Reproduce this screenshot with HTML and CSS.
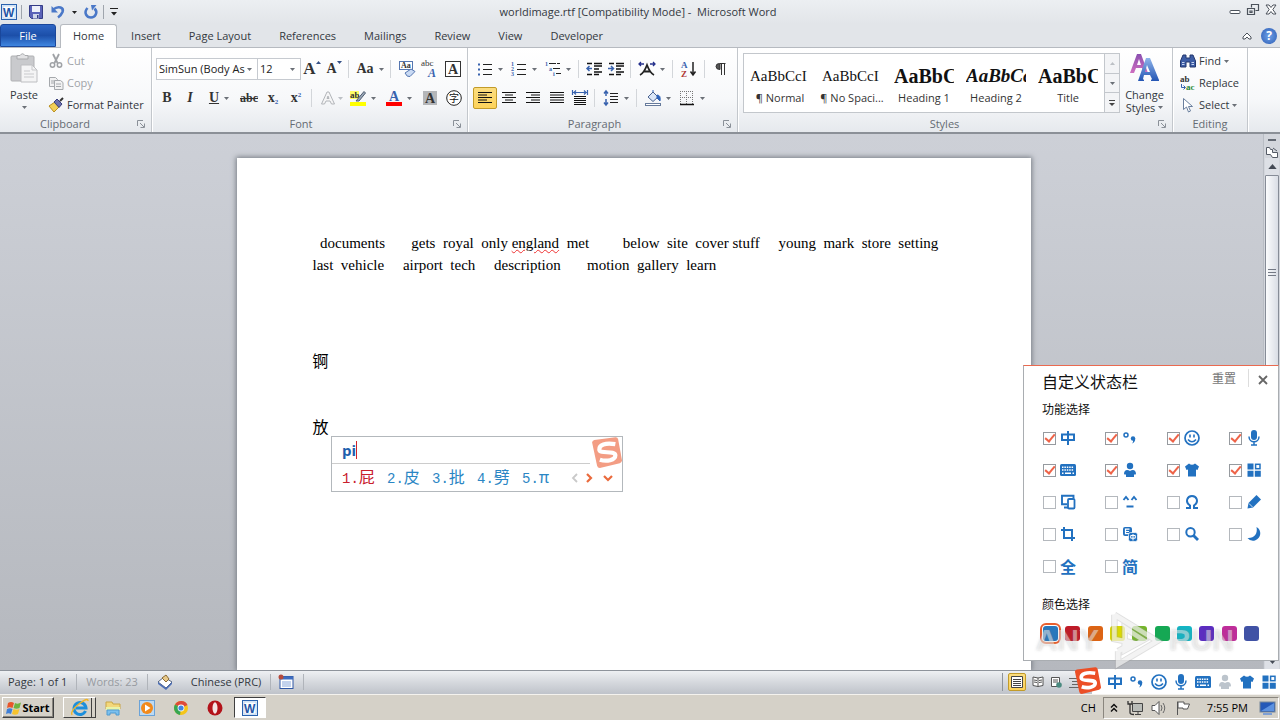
FILE: index.html
```html
<!DOCTYPE html>
<html lang="en">
<head>
<meta charset="utf-8">
<title>worldimage.rtf [Compatibility Mode] - Microsoft Word</title>
<link rel="stylesheet" href="styles.css">
</head>
<body>
<svg class="defs" aria-hidden="true">
  <defs>
    <linearGradient id="gBlue" x1="0" y1="0" x2="0" y2="1"><stop offset="0" stop-color="#8fb4ea"/><stop offset="1" stop-color="#2456b4"/></linearGradient>
    <linearGradient id="gPurple" x1="0" y1="0" x2="0" y2="1"><stop offset="0" stop-color="#8a4fb0"/><stop offset="1" stop-color="#cf6fc0"/></linearGradient>
  </defs>
  <symbol id="word" viewBox="0 0 16 16"><rect x=".5" y=".5" width="15" height="15" fill="#e8f1fb" stroke="#2a62ae"/><rect x="2" y="2" width="12" height="12" fill="#fff" stroke="#9cbfe6" stroke-width=".6"/><text x="2" y="12.500" class="wlogo">W</text></symbol>
  <symbol id="caret" viewBox="0 0 5 3"><path d="M0 0h5L2.500 3z" fill="currentColor"/></symbol>
  <symbol id="launch" viewBox="0 0 8 8"><path d="M.5 6V.5H6M7.500 3.500v4h-4M3 3l4 4" fill="none" stroke="#8a9098"/></symbol>
  <symbol id="sogou" viewBox="0 0 28 28"><path d="M1 5Q1 3 3 2.600L22 .2Q24 0 24.500 2L28 21Q28 23 26 23.600L8 28Q6 28 5.500 26Z" fill="currentColor"/><path d="M22 6.500C13 5 7 7 7.500 11.500C8 15.500 21.500 12 22 16.500C22 21 14 22.500 8 20.500" fill="none" stroke="#fff" stroke-width="3.800"/></symbol>
  <symbol id="zhong" viewBox="0 0 16 16"><path d="M2 4.500h12v5.500H2zM8 1v14" fill="none" stroke="currentColor" stroke-width="2"/></symbol>
  <symbol id="punct" viewBox="0 0 16 16"><circle cx="4" cy="5" r="2" fill="none" stroke="currentColor" stroke-width="1.500"/><circle cx="11" cy="8.500" r="2.200" fill="currentColor"/><path d="M13.200 8.500q.3 3.500-3.200 5q1.500-2 1-4z" fill="currentColor"/></symbol>
  <symbol id="smile" viewBox="0 0 16 16"><circle cx="8" cy="8" r="7" fill="none" stroke="currentColor" stroke-width="1.700"/><path d="M6 4.500v3M10 4.500v3M4 9.500q4 4.500 8 0" fill="none" stroke="currentColor" stroke-width="1.600"/></symbol>
  <symbol id="mic" viewBox="0 0 16 16"><rect x="5" y="0" width="6" height="10" rx="3" fill="currentColor"/><path d="M3 6.500C3 13.500 13 13.500 13 6.500M8 12v3M5 15h6" fill="none" stroke="currentColor" stroke-width="1.500"/></symbol>
  <symbol id="kbd" viewBox="0 0 16 16"><rect y="2" width="16" height="12" rx="1.500" fill="currentColor"/><path d="M2 5.200h12M2 8h12" stroke="#fff" stroke-width="1.400" stroke-dasharray="1.500 .9"/><path d="M2 11.200h1.500M5 11.200h6M12.500 11.200H14" stroke="#fff" stroke-width="1.400"/></symbol>
  <symbol id="person" viewBox="0 0 16 16"><circle cx="8" cy="4" r="3.200" fill="currentColor"/><path d="M2 12C2 7 6 7.500 8 9C10 7.500 14 7 14 12Q14 12.500 12 12.500V15H4V12.500Q2 12.500 2 12Z" fill="currentColor"/></symbol>
  <symbol id="shirt" viewBox="0 0 16 16"><path d="M5 1.500Q8 4 11 1.500L15 4.500L13.500 8L12 7.500V14.500H4V7.500L2.500 8L1 4.500Z" fill="currentColor"/></symbol>
  <symbol id="grid" viewBox="0 0 16 16"><path d="M1.500 1.500h6v6h-6zM1.500 8.800h6v6h-6zM8.800 8.800h6v6h-6z" fill="currentColor"/><rect x="9.600" y="2.300" width="4.400" height="4.400" fill="none" stroke="currentColor" stroke-width="1.500"/></symbol>
  <symbol id="devices" viewBox="0 0 16 16"><path d="M13.500 4V1.800H2v8.500h5M4 13.500h4" fill="none" stroke="currentColor" stroke-width="1.900"/><rect x="8" y="5" width="6.500" height="9.500" rx="1" fill="#fff" stroke="currentColor" stroke-width="1.800"/></symbol>
  <symbol id="face" viewBox="0 0 16 16"><path d="M1.500 6L4 3l2.500 3M9.500 6L12 3l2.500 3M4.500 12.500h7" fill="none" stroke="currentColor" stroke-width="1.900"/></symbol>
  <symbol id="omega" viewBox="0 0 16 16"><path d="M2 14h4v-2.500C.5 7.500 3.500 2 8 2S15.500 7.500 10 11.500V14h4" fill="none" stroke="currentColor" stroke-width="2"/></symbol>
  <symbol id="pencil" viewBox="0 0 16 16"><path d="M10.500 1L15 5.500L7 13.500L1.500 14.500L2.500 9z" fill="currentColor"/><path d="M3 9.500L6.500 13" stroke="#fff" stroke-width=".8"/></symbol>
  <symbol id="crop" viewBox="0 0 16 16"><path d="M4 1v11h11M1 4h11v11" fill="none" stroke="currentColor" stroke-width="2"/></symbol>
  <symbol id="trans" viewBox="0 0 16 16"><rect x="1" y="1" width="9" height="9" rx="2" fill="currentColor"/><path d="M7.500 3.200h-4v4.500h4M3.500 5.500h3.500" fill="none" stroke="#fff" stroke-width="1.200"/><rect x="6.500" y="6.500" width="9" height="9" rx="2" fill="currentColor" stroke="#fff" stroke-width=".7"/><path d="M8.700 9.500h4.600v2.700H8.700zM11 8v6.500" fill="none" stroke="#fff" stroke-width="1"/></symbol>
  <symbol id="search" viewBox="0 0 16 16"><circle cx="6.500" cy="6.300" r="4.200" fill="none" stroke="currentColor" stroke-width="2"/><path d="M9.500 9.500L14 14" stroke="currentColor" stroke-width="2.800"/></symbol>
  <symbol id="moon" viewBox="0 0 16 16"><path d="M10.500 1C16 4 15.500 12 9 14.500Q4 15.500 1.500 12C8 12.500 12 8 10.500 1Z" fill="currentColor"/></symbol>
</svg>

<header class="titlebar">
  <div class="qat">
    <svg class="i16"><use href="#word"/></svg>
    <span class="vline"></span>
    <button aria-label="Save"><svg class="i16" viewBox="0 0 16 16"><path d="M1.500 1.500h13v13h-11l-2-2z" fill="#5a62b8" stroke="#343c86"/><path d="M4 2h8v6H4z" fill="#eef1fa"/><path d="M5 10h6v4.500H5z" fill="#cfd6ea"/><path d="M9 11h1.500v3H9z" fill="#343c86"/></svg></button>
    <button aria-label="Undo"><svg class="i16" viewBox="0 0 16 16"><path d="M3 5.500C9 1 14 4 12.500 8Q11 11.500 8 13.500" fill="none" stroke="#4a78c8" stroke-width="2.600"/><path d="M1.500 2v6.500H8z" fill="#4a78c8"/></svg></button>
    <svg class="caret dark"><use href="#caret"/></svg>
    <button aria-label="Repeat"><svg class="i16" viewBox="0 0 16 16"><path d="M4.500 4C0 9 4 13.500 8 13.500S15.500 8.500 11.500 4.500" fill="none" stroke="#4a78c8" stroke-width="2.600"/><path d="M8 1h5.500L9 6.500z" fill="#4a78c8"/></svg></button>
    <span class="vline"></span>
    <svg class="i8" viewBox="0 0 8 8"><path d="M0 .5h8" stroke="#222"/><path d="M1 4h6L4 7.500z" fill="#222"/></svg>
  </div>
  <h1>worldimage.rtf [Compatibility Mode] -&nbsp; Microsoft Word</h1>
  <div class="wincontrols">
    <button aria-label="Minimize"><svg viewBox="0 0 12 12"><rect x="1" y="6.500" width="10" height="3" rx="1" fill="#fff" stroke="#4c535c"/></svg></button>
    <button aria-label="Restore"><svg viewBox="0 0 12 12"><path d="M4.500 3.500v-3h7v6h-3M.5 4.500h7v6h-7zM3 7h2v1.500H3z" fill="none" stroke="#4c535c" stroke-width="1.200"/></svg></button>
    <button aria-label="Close"><svg viewBox="0 0 12 12"><path d="M1 1h3l2 2.500L8 1h3L7.800 5.500 11 10H8L6 7.500 4 10H1l3.200-4.500z" fill="#fff" stroke="#4c535c"/></svg></button>
  </div>
</header>

<nav class="tabs">
  <button class="file">File</button>
  <button class="tab active">Home</button>
  <button class="tab">Insert</button>
  <button class="tab">Page Layout</button>
  <button class="tab">References</button>
  <button class="tab">Mailings</button>
  <button class="tab">Review</button>
  <button class="tab">View</button>
  <button class="tab">Developer</button>
  <div class="tabend">
    <svg class="i10" viewBox="0 0 10 10"><path d="M1 6l4-4 4 4v2H7L5 6 3 8H1z" fill="#fff" stroke="#4c535c"/></svg>
    <button class="help" aria-label="Help">?</button>
  </div>
</nav>

<section class="ribbon">
  <div class="group clipboard">
    <div class="body">
      <button class="paste"><svg viewBox="0 0 28 30"><rect x="1" y="3" width="23" height="25" rx="1" fill="#c9cacd" stroke="#b0b1b4"/><path d="M7 5V2.500h3Q12.500-1 15 2.500h3V6H7z" fill="#e2e2e4" stroke="#a9aaad"/><path d="M11 12h11l5 5v12H11z" fill="#f4f4f5" stroke="#bdbec1"/><path d="M22 12v5h5M14 18h6M14 21h10M14 24h10" fill="none" stroke="#c8c9cc"/></svg>Paste<svg class="caret"><use href="#caret"/></svg></button>
      <div class="stack">
        <button class="off"><svg class="i16" viewBox="0 0 16 16"><path d="M5 1l4.500 9M11 1L6.500 10" stroke="#9fa2a6" stroke-width="1.800"/><circle cx="4.500" cy="12" r="2.200" fill="none" stroke="#9fa2a6" stroke-width="1.500"/><circle cx="11.500" cy="12" r="2.200" fill="none" stroke="#9fa2a6" stroke-width="1.500"/></svg>Cut</button>
        <button class="off"><svg class="i16" viewBox="0 0 16 16"><path d="M1.500 2.500h6l2 2v7h-8zM3 6h4M3 8h4" fill="#f1f1f2" stroke="#a5a8ac"/><path d="M6.500 5.500h6l2.500 2v7H6.500zM8 9h5M8 11.500h5" fill="#f1f1f2" stroke="#a5a8ac"/></svg>Copy</button>
        <button><svg class="i16" viewBox="0 0 16 16"><path d="M1 9l6-4 4 5-5 5z" fill="#f2cf57" stroke="#b98f1f"/><path d="M6 5l3-3 5 5-3 3.500z" fill="#6a6fae" stroke="#3a3f7c"/><path d="M12 4l3-3" stroke="#333" stroke-width="2"/></svg>Format Painter</button>
      </div>
    </div>
    <div class="caption"><span>Clipboard</span><svg class="i8"><use href="#launch"/></svg></div>
  </div>

  <div class="group font">
    <div class="body rows">
      <div class="row">
        <label class="combo name"><select aria-label="Font"><option>SimSun (Body As</option></select><svg class="caret"><use href="#caret"/></svg></label>
        <label class="combo size"><select aria-label="Font size"><option>12</option></select><svg class="caret"><use href="#caret"/></svg></label>
        <button class="w22 serif big" aria-label="Grow font">A<svg class="caret mark-up flip"><use href="#caret"/></svg></button>
        <button class="w22 serif mid" aria-label="Shrink font">A<svg class="caret mark-up"><use href="#caret"/></svg></button>
        <span class="sep"></span>
        <button class="w34 serif mid">Aa<svg class="caret"><use href="#caret"/></svg></button>
        <span class="sep"></span>
        <button class="w24" aria-label="Clear formatting"><svg class="i16" viewBox="0 0 16 16"><rect x=".5" y=".5" width="13" height="8" fill="#fff" stroke="#5576b0"/><text x="2" y="7" class="t8">Aa</text><path d="M6 12l6-4 4 2.500-5 5q-3 1-5-3.500z" fill="#c9daf4" stroke="#5576b0"/></svg></button>
        <button class="w22" aria-label="Phonetic guide"><svg class="i18" viewBox="0 0 18 18"><text x="0" y="6" class="t9">abc</text><text x="7" y="17" class="t12 blue it">A</text></svg></button>
        <button class="w24" aria-label="Character border"><svg class="i16" viewBox="0 0 16 16"><rect x=".5" y=".5" width="15" height="15" fill="#fff" stroke="#333"/><text x="3" y="13" class="t14">A</text></svg></button>
      </div>
      <div class="row">
        <button class="w22 serif mid">B</button>
        <button class="w24 serif mid it">I</button>
        <button class="w34 serif mid"><u>U</u><svg class="caret"><use href="#caret"/></svg></button>
        <button class="w26 serif small"><s>abc</s></button>
        <button class="w22 serif mid">x<sub>2</sub></button>
        <button class="w24 serif mid">x<sup>2</sup></button>
        <span class="sep"></span>
        <button class="w30" aria-label="Text effects"><svg class="i16" viewBox="0 0 16 16"><path d="M1.500 14L7 2h2l5.500 12h-3L10 11H6l-1.500 3zM7 8.500h2L8 6z" fill="#f5f5f6" stroke="#b2b5b9"/></svg><svg class="caret pale"><use href="#caret"/></svg></button>
        <button class="w34" aria-label="Highlight"><svg class="i16" viewBox="0 0 16 16"><rect y="12" width="16" height="4" fill="#ff0"/><rect y="1" width="9" height="8" fill="#ff6"/><text x="0" y="8" class="t9 bold">ab</text><path d="M6 11L14 1.500l1.500 1.500L9 11z" fill="#9aa7b8" stroke="#4f5d70"/></svg><svg class="caret"><use href="#caret"/></svg></button>
        <button class="w34 shift" aria-label="Font color"><svg class="i16" viewBox="0 0 16 16"><text x="3" y="11" class="t14 blue">A</text><rect y="12" width="16" height="4" fill="#f00"/></svg><svg class="caret"><use href="#caret"/></svg></button>
        <button class="w24" aria-label="Character shading"><svg class="i16" viewBox="0 0 16 16"><rect x="1" y="1" width="14" height="14" fill="#b4b6b9"/><text x="3" y="13" class="t14">A</text></svg></button>
        <button class="w24" aria-label="Enclose characters"><svg class="i16" viewBox="0 0 16 16"><circle cx="8" cy="8" r="7.300" fill="#fff" stroke="#222"/><text x="3" y="12" class="cjk10">字</text></svg></button>
      </div>
    </div>
    <div class="caption"><span>Font</span><svg class="i8"><use href="#launch"/></svg></div>
  </div>

  <div class="group para">
    <div class="body rows">
      <div class="row">
        <button class="w34" aria-label="Bullets"><svg class="i16" viewBox="0 0 16 16"><path d="M6 3.500h9M6 8.500h9M6 13.500h9" stroke="#222"/><path d="M1 2.500h2v2H1zM1 7.500h2v2H1zM1 12.500h2v2H1z" fill="#3862ae"/></svg><svg class="caret"><use href="#caret"/></svg></button>
        <button class="w34" aria-label="Numbering"><svg class="i16" viewBox="0 0 16 16"><path d="M6 3.500h9M6 8.500h9M6 13.500h9" stroke="#222"/><text x="0" y="5" class="t6">1</text><text x="0" y="10" class="t6">2</text><text x="0" y="15" class="t6">3</text></svg><svg class="caret"><use href="#caret"/></svg></button>
        <button class="w34" aria-label="Multilevel list"><svg class="i16" viewBox="0 0 16 16"><path d="M4 2.500h11M8 7.500h8M11 12.500h5" stroke="#222" stroke-dasharray="7 1"/><text x="0" y="5" class="t6">1</text><text x="4" y="10" class="t6">a</text><text x="8" y="15" class="t6">i</text></svg><svg class="caret"><use href="#caret"/></svg></button>
        <span class="sep"></span>
        <button class="w22" aria-label="Decrease indent"><svg class="i16" viewBox="0 0 16 16"><path d="M1 2.500h5M8 2.500h8M8 5h8M8 8h5M8 11h8M1 13.500h5M8 13.500h5" stroke="#111" stroke-width="1.500"/><path d="M6 7.500H1M3.500 5L1 7.500 3.500 10" fill="none" stroke="#3862ae" stroke-width="1.500"/></svg></button>
        <button class="w22" aria-label="Increase indent"><svg class="i16" viewBox="0 0 16 16"><path d="M1 2.500h5M8 2.500h8M8 5h8M8 8h5M8 11h8M1 13.500h5M8 13.500h5" stroke="#111" stroke-width="1.500"/><path d="M0 7.500h5M3 5l2.500 2.500L3 10" fill="none" stroke="#3862ae" stroke-width="1.500"/></svg></button>
        <span class="sep"></span>
        <button class="w34" aria-label="Asian layout"><svg class="i16" viewBox="0 0 16 16"><path d="M1 14Q5 12 8 4Q11 12 15 14M4.500 10.500h7" fill="none" stroke="#222" stroke-width="1.800"/><path d="M0 3h5M2 1L0 3l2 2M16 3h-5M14 1l2 2-2 2" fill="none" stroke="#25308c" stroke-width="1.300"/></svg><svg class="caret"><use href="#caret"/></svg></button>
        <span class="sep"></span>
        <button class="w24" aria-label="Sort"><svg class="i18" viewBox="0 0 18 18"><text x="1" y="8" class="t9 bold blue">A</text><text x="1" y="17" class="t9 bold red">Z</text><path d="M13 2v12M10.500 11.500L13 15l2.500-3.500" fill="none" stroke="#222" stroke-width="1.500"/></svg></button>
        <span class="sep"></span>
        <button class="w24" aria-label="Show marks"><svg class="i16" viewBox="0 0 16 16"><path d="M12.500 2.500H6.500Q3 2.500 3 5.500T7 8.500V3M8.500 2v12M11.500 2v12" fill="#555" stroke="#333"/></svg></button>
      </div>
      <div class="row">
        <button class="w24 chosen" aria-label="Align left"><svg class="i16" viewBox="0 0 16 16"><path d="M1 2.500h14M1 5h9M1 7.500h14M1 10h9M1 12.500h14" stroke="#111"/></svg></button>
        <button class="w24" aria-label="Center"><svg class="i16" viewBox="0 0 16 16"><path d="M1 2.500h14M4 5h8M1 7.500h14M4 10h8M1 12.500h14" stroke="#111"/></svg></button>
        <button class="w24" aria-label="Align right"><svg class="i16" viewBox="0 0 16 16"><path d="M1 2.500h14M6 5h9M1 7.500h14M6 10h9M1 12.500h14" stroke="#111"/></svg></button>
        <button class="w24" aria-label="Justify"><svg class="i16" viewBox="0 0 16 16"><path d="M1 2.500h14M1 5h14M1 7.500h14M1 10h14M1 12.500h14" stroke="#111"/></svg></button>
        <button class="w22" aria-label="Distribute"><svg class="i16" viewBox="0 0 16 16"><path d="M.5 0v5M15.500 0v5M1 2.500h14M4 .5l-2 2 2 2M12 .5l2 2-2 2" fill="none" stroke="#3862ae" stroke-width="1.200"/><path d="M2 6.500h12M2 8.500h12M2 10.500h12M2 12.500h12M2 14.500h12" stroke="#111"/></svg></button>
        <span class="sep"></span>
        <button class="w34" aria-label="Line spacing"><svg class="i16" viewBox="0 0 16 16"><path d="M7 3.500h8M7 6.500h8M7 9.500h8M7 12.500h8" stroke="#222"/><path d="M3 1v5M1 3.500L3 1l2 2.500M3 9v6M1 12.500L3 15l2-2.500" fill="none" stroke="#3862ae" stroke-width="1.500"/></svg><svg class="caret"><use href="#caret"/></svg></button>
        <span class="sep"></span>
        <button class="w34" aria-label="Shading"><svg class="i16" viewBox="0 0 16 16"><path d="M3 7l5-5 5 5-5 4.500z" fill="#dbe7f8" stroke="#4a6290"/><path d="M8 2V0M12 5q4 0 3 6l-3-3z" fill="#2f62b8" stroke="#2f62b8"/><rect x=".5" y="13.500" width="15" height="2" fill="#fff" stroke="#667a9b"/></svg><svg class="caret"><use href="#caret"/></svg></button>
        <button class="w34" aria-label="Borders"><svg class="i16" viewBox="0 0 16 16"><path d="M1 1.500h13M1 7.500h13M1.500 1v13M7.500 1v13M13.500 1v13" stroke="#777" stroke-dasharray="1 1"/><path d="M1 14.500h14" stroke="#111" stroke-width="1.500"/></svg><svg class="caret"><use href="#caret"/></svg></button>
      </div>
    </div>
    <div class="caption"><span>Paragraph</span><svg class="i8"><use href="#launch"/></svg></div>
  </div>

  <div class="group styles">
    <div class="body">
      <div class="gallery">
        <button><span class="sample">AaBbCcI</span><span>¶ Normal</span></button>
        <button><span class="sample">AaBbCcI</span><span>¶ No Spaci...</span></button>
        <button><span class="sample h1">AaBbC</span><span>Heading 1</span></button>
        <button><span class="sample h2">AaBbCc</span><span>Heading 2</span></button>
        <button><span class="sample h1">AaBbC</span><span>Title</span></button>
        <div class="scroller">
          <button aria-label="Up"><svg class="caret pale flip"><use href="#caret"/></svg></button>
          <button aria-label="Down"><svg class="caret"><use href="#caret"/></svg></button>
          <button aria-label="More"><svg class="i8" viewBox="0 0 8 8"><path d="M1 1.500h6" stroke="#444"/><path d="M1 4h6L4 7z" fill="#444"/></svg></button>
        </div>
      </div>
      <button class="change"><svg viewBox="0 0 30 30"><path d="M0 20L7 1h4l7 19h-4l-2-5H6l-2 5zM7 12h4L9 6z" fill="url(#gPurple)"/><path d="M8 28L16 5h4l9 22v1h-8v-1l1-1-2-4h-6l-1 4 1 1v1zM15 19h5l-3-7z" fill="url(#gBlue)"/></svg><span>Change</span><span>Styles <svg class="caret"><use href="#caret"/></svg></span></button>
    </div>
    <div class="caption"><span>Styles</span><svg class="i8"><use href="#launch"/></svg></div>
  </div>

  <div class="group editing">
    <div class="body">
      <div class="stack">
        <button><svg class="i16" viewBox="0 0 16 16"><path d="M3 2h3v3h4V2h3l2.500 6v6H10V9H6v5H.5V8z" fill="#3d5da5" stroke="#24386f"/><path d="M2 9.500h2.500M11.500 9.500H14M2 11.500h2.500M11.500 11.500H14" stroke="#c6d4f0" stroke-width="1.200"/></svg>Find <svg class="caret"><use href="#caret"/></svg></button>
        <button><svg class="i16" viewBox="0 0 16 16"><text x="0" y="7" class="t9 bold">ab</text><text x="6" y="15" class="t9 bold green">ac</text><path d="M1.500 9v3.500H5M3.500 10.500l2 2-2 2" fill="none" stroke="#3862ae"/></svg>Replace</button>
        <button><svg class="i16" viewBox="0 0 16 16"><path d="M3.500 1.500v11l3-2.500 2 5 2-1-2-4.500h4z" fill="#fff" stroke="#6a7f9e"/></svg>Select <svg class="caret"><use href="#caret"/></svg></button>
      </div>
    </div>
    <div class="caption"><span>Editing</span></div>
  </div>
</section>

<main class="workspace">
  <div class="canvas">
    <article class="page">
      <p class="words">  documents       gets  royal  only <span class="err">england</span>  met         below  site  cover stuff     young  mark  store  setting</p>
      <p class="words">last  vehicle     airport  tech     description       motion  gallery  learn</p>
      <p class="han">锕</p>
      <p class="han second">放</p>
    </article>
  </div>
  <div class="scrollbar">
    <span class="split"></span>
    <button class="ruler" aria-label="Ruler"><svg class="i12" viewBox="0 0 12 12"><path d="M.5 1.500h3l1 2h2v3h5v5h-5l-2-3h-4zM7 2l4 3" fill="#fff" stroke="#555b66"/></svg></button>
    <button class="up" aria-label="Scroll up"><svg class="caret tall flip"><use href="#caret"/></svg></button>
    <div class="thumb"><i></i></div>
    <button class="down" aria-label="Scroll down"><svg class="caret tall"><use href="#caret"/></svg></button>
  </div>
</main>

<footer class="status">
  <span class="cell">Page: 1 of 1</span>
  <span class="cell faint">Words: 23</span>
  <span class="cell proof"><svg class="i16" viewBox="0 0 16 16"><path d="M1 8l6-5 8 5-6 6z" fill="#fff" stroke="#54627e"/><path d="M1 8v2l8 6 6-6V8l-6 6z" fill="#4e70b8"/><path d="M5 4l4-3 3 4-3 3z" fill="#e8c98a" stroke="#8a6a34"/></svg></span>
  <span class="cell plain">Chinese (PRC)</span>
  <span class="cell macro"><svg class="i16" viewBox="0 0 16 16"><rect x="2" y="2.500" width="13" height="12" fill="#fff" stroke="#2f57a5"/><rect x="2" y="2.500" width="13" height="3" fill="#3d6cc0"/><path d="M4 8h9M4 10h9M4 12h9" stroke="#88a6da"/><circle cx="3" cy="3" r="2.500" fill="#b5493b"/></svg></span>
  <div class="views">
    <button class="chosen" aria-label="Print layout"><svg class="i14" viewBox="0 0 14 14"><path d="M1.500 1.500h11v11h-11zM3 4.500h8M3 6.500h8M3 8.500h8M3 10.500h8" fill="#fff" stroke="#444"/></svg></button>
    <button aria-label="Reading"><svg class="i12" viewBox="0 0 12 12"><path d="M6 2L1 1v8.500l5 1 5-1V1zM6 2v8.500M2 4l3 .5M2 6l3 .5M7 4.500l3-.5M7 6.500l3-.5" fill="#fff" stroke="#555"/></svg></button>
    <button aria-label="Web layout"><svg class="i12" viewBox="0 0 12 12"><path d="M1.500 1.500h8v9h-8zM3 4h5M3 6h5" fill="#fff" stroke="#555"/><circle cx="9" cy="9" r="2.800" fill="#4a8a80"/></svg></button>
    <button aria-label="Outline"><svg class="i12" viewBox="0 0 12 12"><path d="M1 2.500h10M4 5.500h7M4 8.500h7M1 11.500h10" stroke="#666"/></svg></button>
  </div>
</footer>

<footer class="taskbar">
  <button class="start"><svg class="i16" viewBox="0 0 16 16"><path d="M2 3q3-2 6 0L6.500 8q-3-1.500-5.500 0z" fill="#e8562a"/><path d="M9 3q3 1.500 6-.5L13.500 8q-3 1.500-6 0z" fill="#6db33f"/><path d="M1 9q3-1.500 5.500 0L5 14q-2.500-1.500-5 0z" fill="#3f7fd6"/><path d="M7.500 9q3 1.500 6 0L12 14q-3 1.500-6 0z" fill="#f7c32e"/></svg>Start</button>
  <div class="apps">
    <button class="ie" aria-label="Internet Explorer"><svg class="i18" viewBox="0 0 18 18"><path d="M14.500 12A6 6 0 1 1 15 9H5" fill="none" stroke="#1d8fdc" stroke-width="3"/><path d="M1 16Q-1 12 8 5T17 2" fill="none" stroke="#efb52a" stroke-width="1.500"/></svg></button>
    <button aria-label="Explorer"><svg class="i18" viewBox="0 0 18 18"><path d="M2 3h6l1 2h7v5H2z" fill="#f3d77a" stroke="#c9a646"/><path d="M2 8h14v3H2z" fill="#e9f3a8"/><path d="M3 16v-5h12v5h-3v-2H6v2z" fill="#7cc0ee" stroke="#4f9ad0"/></svg></button>
    <button aria-label="Media Player"><svg class="i18" viewBox="0 0 18 18"><rect x="1.500" y="1.500" width="15" height="15" fill="#bddaf3" stroke="#6ba3d8"/><circle cx="9" cy="9" r="6" fill="#f28a1c"/><path d="M7 5.500L12.500 9 7 12.500z" fill="#fff"/></svg></button>
    <button aria-label="Chrome"><svg class="i18" viewBox="0 0 18 18"><circle cx="9" cy="9" r="7" fill="#f5c518"/><path d="M9 9L3 5.500A7 7 0 0 1 15.500 6z" fill="#dd4a3a"/><path d="M9 9L3 5.500A7 7 0 0 0 8 16z" fill="#37a652"/><circle cx="9" cy="9" r="3.400" fill="#fff"/><circle cx="9" cy="9" r="2.600" fill="#4285e0"/></svg></button>
    <button aria-label="Opera"><svg class="i18" viewBox="0 0 18 18"><circle cx="9" cy="9" r="7.500" fill="#b3131a"/><ellipse cx="9" cy="9" rx="2.500" ry="5.800" fill="#f4e4e4"/></svg></button>
    <button class="current" aria-label="Word"><svg class="i16"><use href="#word"/></svg></button>
  </div>
  <span class="lang">CH</span>
  <div class="tray">
    <svg class="i10" viewBox="0 0 10 10"><path d="M2 4.500L5 1.500l3 3M2 8.500l3-3 3 3" fill="none" stroke="#111" stroke-width="1.500"/></svg>
    <svg class="i16" viewBox="0 0 16 16"><path d="M5.500 3.500h10v8h-10zM8 14.500h6M11 12v2" fill="#b9bcb8" stroke="#444"/><path d="M1 1v3h4V1M3 4v8.500q0 2 4 2" fill="none" stroke="#333" stroke-width="1.300"/></svg>
    <svg class="i16" viewBox="0 0 16 16"><path d="M1 5.500h3l4-4v13l-4-4H1z" fill="#fff" stroke="#555"/><path d="M10 5q2 3 0 6M12 3q3.500 5 0 10" fill="none" stroke="#666"/></svg>
    <svg class="i16" viewBox="0 0 16 16"><path d="M2.500 15V1.500M3 2h6v2h5.500l-2 5H8V8H3z" fill="#fff" stroke="#555"/></svg>
    <time>7:55 PM</time>
    <svg class="i16" viewBox="0 0 16 16"><rect x="1" y="2" width="15" height="10" fill="#2559b8" stroke="#789"/><path d="M2 11L15 3v8z" fill="#5d92e0"/><path d="M4 14h9" stroke="#7fa0d4" stroke-width="2"/></svg>
  </div>
</footer>

<div class="candidates">
  <div class="typed">pi</div>
  <svg class="mark"><use href="#sogou"/></svg>
  <div class="options">
    <span class="first"><i>1.</i>屁</span><span><i>2.</i>皮</span><span><i>3.</i>批</span><span><i>4.</i>劈</span><span><i>5.</i>π</span>
    <svg class="pager" viewBox="0 0 42 10"><path d="M6 1L2 5l4 4" fill="none" stroke="#c9c9c9" stroke-width="1.800"/><path d="M16 1l4 4-4 4M33 3l4 4 4-4" fill="none" stroke="#ea6a3c" stroke-width="2.200"/></svg>
  </div>
</div>

<section class="panel" lang="zh">
  <header><h2>自定义状态栏</h2><button class="reset">重置</button><button class="close" aria-label="关闭"><svg class="i10" viewBox="0 0 10 10"><path d="M1 1l8 8M9 1L1 9" stroke="#666" stroke-width="1.800"/></svg></button></header>
  <h3>功能选择</h3>
  <div class="features">
    <label><input type="checkbox" checked><svg class="i16"><use href="#zhong"/></svg></label>
    <label><input type="checkbox" checked><svg class="i16"><use href="#punct"/></svg></label>
    <label><input type="checkbox" checked><svg class="i16"><use href="#smile"/></svg></label>
    <label><input type="checkbox" checked><svg class="i16"><use href="#mic"/></svg></label>
    <label><input type="checkbox" checked><svg class="i16"><use href="#kbd"/></svg></label>
    <label><input type="checkbox" checked><svg class="i16"><use href="#person"/></svg></label>
    <label><input type="checkbox" checked><svg class="i16"><use href="#shirt"/></svg></label>
    <label><input type="checkbox" checked><svg class="i16"><use href="#grid"/></svg></label>
    <label><input type="checkbox"><svg class="i16"><use href="#devices"/></svg></label>
    <label><input type="checkbox"><svg class="i16"><use href="#face"/></svg></label>
    <label><input type="checkbox"><svg class="i16"><use href="#omega"/></svg></label>
    <label><input type="checkbox"><svg class="i16"><use href="#pencil"/></svg></label>
    <label><input type="checkbox"><svg class="i16"><use href="#crop"/></svg></label>
    <label><input type="checkbox"><svg class="i16"><use href="#trans"/></svg></label>
    <label><input type="checkbox"><svg class="i16"><use href="#search"/></svg></label>
    <label><input type="checkbox"><svg class="i16"><use href="#moon"/></svg></label>
    <label><input type="checkbox"><b>全</b></label>
    <label><input type="checkbox"><b>简</b></label>
  </div>
  <h3>颜色选择</h3>
  <div class="swatches">
    <button class="sw c1 on" aria-label="蓝"></button><button class="sw c2" aria-label="红"></button><button class="sw c3" aria-label="橙"></button><button class="sw c4" aria-label="黄"></button><button class="sw c5" aria-label="草绿"></button><button class="sw c6" aria-label="绿"></button><button class="sw c7" aria-label="青"></button><button class="sw c8" aria-label="紫"></button><button class="sw c9" aria-label="粉"></button><button class="sw c10" aria-label="靛"></button>
  </div>
</section>

<div class="imebar">
  <svg class="logo"><use href="#sogou"/></svg>
  <svg class="i16"><use href="#zhong"/></svg>
  <svg class="i16"><use href="#punct"/></svg>
  <svg class="i16"><use href="#smile"/></svg>
  <svg class="i16"><use href="#mic"/></svg>
  <svg class="i16"><use href="#kbd"/></svg>
  <svg class="i16 dim"><use href="#person"/></svg>
  <svg class="i16"><use href="#shirt"/></svg>
  <svg class="i16"><use href="#grid"/></svg>
</div>

<div class="watermark"><span>ANY</span><svg viewBox="0 0 60 68"><path d="M9 7L55 35 13 60V46M9 7v26l20 4-16 9M20 21v24l20-11z" fill="none" stroke="#999" stroke-opacity=".3" stroke-width="7"/><path d="M9 7L55 35 13 60V46M9 7v26l20 4-16 9M20 21v24l20-11z" fill="none" stroke="#fff" stroke-opacity=".6" stroke-width="5"/></svg><span>RUN</span></div>
</body>
</html>
```

FILE: styles.css
```css
* { box-sizing: border-box; }
body {
  margin: 0;
  height: 100vh;
  display: flex;
  flex-direction: column;
  overflow: hidden;
  position: relative;
  background: #e3e6ea;
  color: #33383e;
  font: 11px/16px "Open Sans", "Noto Sans", "Noto Sans CJK SC", sans-serif;
}
h1, h2, h3, p { margin: 0; font-weight: 400; }
button {
  border: 0;
  padding: 0;
  background: none;
  color: inherit;
  font: inherit;
  display: flex;
  align-items: center;
  justify-content: center;
}
svg { display: block; flex: none; overflow: visible; }
.defs { position: absolute; width: 0; height: 0; overflow: hidden; }
.i8 { width: 8px; height: 8px; }
.i10 { width: 10px; height: 10px; }
.i12 { width: 12px; height: 12px; }
.i14 { width: 14px; height: 14px; }
.i16 { width: 16px; height: 16px; }
.i18 { width: 18px; height: 18px; }
.caret { width: 5px; height: 3px; color: #6b7077; }
.caret.dark { color: #222; }
.caret.pale { color: #bcc0c5; }
.caret.tall { width: 9px; height: 5px; color: #444a55; }
.caret.flip { transform: rotate(180deg); }
.caret.mark-up { align-self: flex-start; margin-top: 3px; color: #345086; }

/* title bar */
.titlebar {
  height: 24px;
  flex: none;
  display: grid;
  grid-template-columns: 1fr auto 1fr;
  align-items: center;
  background: linear-gradient(#eceff2, #e2e5e9);
}
.titlebar h1 { font-size: 11px; padding-right: 4px; }
.qat { display: flex; align-items: center; gap: 6px; padding-left: 1px; }
.qat .vline { margin-left: -2px; }
.vline { width: 1px; height: 14px; background: #9fa5ad; }
.wincontrols { display: flex; justify-content: flex-end; gap: 6px; padding: 0 3px 4px 0; }
.wincontrols svg { width: 12px; height: 12px; }

/* ribbon tabs */
.tabs {
  height: 24px;
  flex: none;
  display: flex;
  background: #e2e5e9;
  border-bottom: 1px solid #b6bac0;
}
.file {
  width: 56px;
  color: #fff;
  border: 1px solid #1a479b;
  border-radius: 3px 3px 0 0;
  background: linear-gradient(#2d65c4, #1c4fa9 50%, #3f86e0);
}
.tab { padding: 0 14px; }
.tab.active {
  margin: 0 0 -1px 4px;
  padding: 0 12px 1px;
  border: 1px solid #b6bac0;
  border-bottom: 0;
  border-radius: 3px 3px 0 0;
  background: #fff;
}
.tabend { margin-left: auto; display: flex; align-items: center; gap: 9px; padding-right: 3px; }
.help {
  width: 16px;
  height: 16px;
  border-radius: 8px;
  background: radial-gradient(#6da1e8, #2d5cb4);
  color: #fff;
  font-weight: 700;
  font-size: 12px;
}

/* ribbon */
.ribbon {
  height: 86px;
  flex: none;
  display: flex;
  background: linear-gradient(#fff, #f7f8fa 60%, #e6e9ed);
  border-bottom: 2px solid #8b9097;
}
.group {
  display: flex;
  flex-direction: column;
  border-right: 1px solid #c3c7cc;
  box-shadow: 1px 0 0 #fff;
}
.body { flex: 1; display: flex; }
.caption { height: 16px; display: flex; align-items: center; padding-right: 6px; color: #656b73; }
.caption span { flex: 1; text-align: center; padding-right: 7px; }
.clipboard { width: 152px; }
.paste { width: 48px; flex-direction: column; justify-content: flex-start; padding-top: 5px; }
.paste > svg:first-child { width: 28px; height: 30px; margin-bottom: 4px; }
.paste .caret { margin-top: 3px; }
.stack { display: flex; flex-direction: column; padding-top: 2px; }
.stack button { height: 22px; gap: 3px; justify-content: flex-start; }
.off { color: #a0a3a8; }
.rows { flex-direction: column; gap: 5px; padding-top: 9px; }
.font { width: 316px; padding-left: 4px; }
.para { width: 270px; padding-left: 5px; }
.row { display: flex; height: 24px; align-items: center; }
.row button { height: 22px; flex: none; }
.w22 { width: 22px; }
.w24 { width: 24px; }
.w26 { width: 26px; }
.w30 { width: 30px; gap: 2px; }
.w34 { width: 34px; gap: 5px; }
.shift { margin: 0 2px; }
.sep { width: 8px; height: 18px; flex: none; background: linear-gradient(90deg, transparent 3px, #d3d6da 3px 4px, transparent 4px); }
.combo { display: flex; align-items: center; height: 22px; border: 1px solid #c6cad0; background: #fff; padding-right: 5px; }
.combo select { flex: 1; min-width: 0; border: 0; padding: 0 0 0 2px; appearance: none; background: none; font: inherit; color: #222; overflow: hidden; }
.name { width: 102px; }
.size { width: 43px; border-left: 0; }
.serif { font-family: "Liberation Serif", serif; font-weight: 700; color: #333; }
.serif sup { font-size: 7px; line-height: 8px; align-self: flex-start; padding-top: 4px; color: #3862ae; }
.serif sub { font-size: 7px; line-height: 8px; align-self: flex-end; padding-bottom: 3px; color: #3862ae; }
.big { font-size: 17px; }
.mid { font-size: 14px; }
.small { font-size: 12px; }
.it { font-style: italic; }
.chosen { border: 1px solid #c29b29; border-radius: 2px; background: linear-gradient(#fbdd80, #fdd35a); }
svg text { font-family: "Liberation Serif", serif; fill: #333; }
svg .wlogo { font: 700 12px "Liberation Sans", sans-serif; fill: #1f55a5; }
svg .t6 { font-size: 6px; fill: #3862ae; font-weight: 700; }
svg .t8 { font-size: 8px; font-weight: 700; }
svg .t9 { font-size: 9px; }
svg .t12 { font-size: 12px; font-weight: 700; }
svg .t14 { font-size: 14px; font-weight: 700; }
svg .bold { font-weight: 700; }
svg .blue { fill: #3862ae; }
svg .red { fill: #b03a35; }
svg .green { fill: #2b8a35; }
svg .cjk10 { font: 10px "Noto Sans CJK SC", sans-serif; fill: #111; }

.styles { width: 435px; }
.styles .body { padding: 5px 3px 0 5px; }
.gallery { display: flex; width: 377px; height: 60px; border: 1px solid #c3c7cc; background: #fff; }
.gallery > button { width: 72px; flex-direction: column; overflow: hidden; padding-top: 2px; color: #333; }
.sample { display: block; width: 60px; height: 27px; line-height: 26px; overflow: hidden; white-space: nowrap; text-align: left; font-family: "Liberation Serif", serif; font-size: 15px; color: #111; }
.sample.h1 { font-size: 20px; font-weight: 700; }
.sample.h2 { font-size: 19px; font-weight: 700; font-style: italic; }
.scroller { display: flex; flex: 1; flex-direction: column; border-left: 1px solid #c3c7cc; background: #f3f4f6; }
.scroller button { flex: 1; }
.scroller button + button { border-top: 1px solid #c3c7cc; }
.change { flex: 1; flex-direction: column; line-height: 13px; justify-content: flex-start; }
.change > svg { width: 30px; height: 30px; margin-bottom: 5px; }
.change span { display: flex; align-items: center; gap: 3px; }
.editing { width: 75px; }
.editing .body { padding-left: 7px; }
.editing .caption { padding: 0; }
.editing .caption span { padding: 0; }

/* document */
.workspace { flex: 1; min-height: 0; display: flex; background: linear-gradient(#cdd0d7, #b5b8be); }
.canvas { flex: 1; overflow: hidden; padding: 24px 0 0 4px; }
.page {
  width: 794px;
  height: 100%;
  margin: 0 auto;
  padding: 74px 76px 0;
  background: #fff;
  box-shadow: 0 0 5px 1px #777c84;
  color: #000;
}
.words { font: 15px/22px "Liberation Serif", serif; white-space: pre; }
.err { text-decoration: underline wavy #e33 1px; text-underline-offset: 1px; }
.han { font: 16px/24px "Noto Sans CJK SC", sans-serif; margin-top: 72px; }
.han.second { margin-top: 42px; }
.scrollbar { width: 17px; display: flex; flex-direction: column; align-items: stretch; background: #d3d6dc; border-left: 1px solid #b9bdc4; padding: 5px 1px 0; }
.split { width: 8px; height: 2px; margin: 0 auto 4px; background: #646a74; }
.ruler { height: 13px; }
.up, .down { height: 17px; background: #dde0e6; }
.thumb { flex: 1; border: 1px solid #868c97; border-radius: 1px; background: linear-gradient(90deg, #fbfcfd, #d9dde5); display: flex; padding-top: 93px; justify-content: center; }
.thumb i { width: 8px; height: 8px; background: repeating-linear-gradient(#737985 0 1px, transparent 1px 3px); }

/* status bar */
.status {
  height: 24px;
  flex: none;
  display: flex;
  align-items: center;
  border-top: 1px solid #8e939b;
  background: linear-gradient(#eef0f3, #d5d8dd 50%, #bfc3ca);
  padding-bottom: 2px;
}
.cell { padding: 0 9px; border-right: 1px solid #b0b4ba; display: flex; align-items: center; height: 16px; }
.cell:first-child { padding-left: 8px; }
.cell.faint { color: #979ba1; }
.cell.proof { border: 0; }
.cell.macro { padding-left: 7px; }
.views { display: flex; align-items: center; gap: 6px; margin: 0 200px 0 auto; border-left: 1px solid #8e939b; padding-left: 5px; }
.views .chosen { width: 18px; height: 18px; }

/* taskbar */
.taskbar {
  height: 26px;
  flex: none;
  display: flex;
  align-items: center;
  border-top: 1px solid #f4f2ee;
  background: #d5d1c8;
  color: #000;
  padding: 0 1px 0 2px;
}
.start {
  width: 52px;
  height: 21px;
  border: 1px solid;
  border-color: #fff #404040 #404040 #fff;
  box-shadow: inset -1px -1px #88857e;
  font-weight: 700;
}
.apps { display: flex; align-items: center; margin-left: 9px; flex: 1; }
.apps button { width: 34px; height: 21px; }
.apps .ie { width: 33px; border: 1px solid; border-color: #fff #404040 #404040 #fff; box-shadow: inset -3px 0 #d5d1c8, inset -4px 0 #404040; }
.apps .current { width: 32px; margin-left: 2px; border: 1px solid; border-color: #404040 #fff #fff #404040; background: #fff; }
.lang { padding-right: 7px; }
.tray { display: flex; align-items: center; gap: 8px; height: 22px; padding: 0 3px 0 5px; border: 1px solid; border-color: #8a867e #fff #fff #8a867e; }
.tray time { padding: 0 3px 0 8px; }

/* candidate window */
.candidates {
  position: absolute;
  left: 331px;
  top: 436px;
  width: 292px;
  border: 1px solid #b3b8bc;
  background: #fff;
  color: #2b86c4;
}
.typed { display: flex; align-items: center; height: 27px; margin-right: 32px; padding-left: 10px; border-bottom: 1px solid #ccc; color: #1e5fae; font: 700 15px/20px "Open Sans", sans-serif; }
.typed::after { content: ""; width: 1px; height: 18px; background: #d2232a; }
.mark { position: absolute; right: 0; top: 0; width: 31px; height: 31px; color: #f39d84; }
.options { display: flex; align-items: center; height: 27px; padding-left: 10px; font: 16px/24px "Noto Sans CJK SC", sans-serif; }
.options span { width: 45px; white-space: nowrap; }
.options i { font: 14px/24px "Liberation Mono", monospace; }
.options .first { color: #c8202c; }
.pager { width: 42px; height: 10px; margin-left: 4px; }

/* status bar customiser */
.panel {
  position: absolute;
  right: 1px;
  bottom: 59px;
  width: 256px;
  height: 296px;
  padding: 3px 13px 0 18px;
  border: 1px solid #a9adb1;
  border-top: 1px solid #ea6a50;
  background: #fff;
  color: #111;
  font: 12px/18px "Noto Sans CJK SC", sans-serif;
}
.panel header { display: flex; align-items: flex-start; height: 30px; }
.panel h2 { flex: 1; font-size: 16px; line-height: 24px; }
.panel h3 { font-size: 12px; line-height: 20px; }
.reset { color: #777; padding-right: 12px; border-right: 1px solid #ddd; }
.close { width: 24px; height: 22px; padding-left: 4px; margin-right: -8px; }
.features { display: grid; grid-template-columns: repeat(4, 62px); grid-auto-rows: 32px; margin: 3px -26px 12px 0; color: #2271c0; }
.features label { display: flex; align-items: center; gap: 4px; padding-left: 1px; }
.features b { font-size: 16px; line-height: 16px; width: 16px; }
.features input {
  appearance: none;
  width: 13px;
  height: 13px;
  margin: 0;
  border: 1px solid #b4b8bd;
  background: #fff;
  display: grid;
  place-items: center;
}
.features input:checked { border-color: #969a9f; }
.features input:checked::after { content: ""; width: 4px; height: 8px; margin-top: -2px; border: solid #ee6348; border-width: 0 2px 2px 0; transform: rotate(40deg); }
.swatches { display: flex; justify-content: space-between; align-items: center; margin: 12px 6px 0 1px; }
.sw { width: 15px; height: 15px; border-radius: 3px; }
.sw.on { outline: 2px solid #e9602f; outline-offset: 1px; }
.c1 { background: #2878bd; }
.c2 { background: #bf1b28; }
.c3 { background: #dd6414; }
.c4 { background: #d9d800; }
.c5 { background: #74b52a; }
.c6 { background: #15a854; }
.c7 { background: #14b5c4; }
.c8 { background: #5c2dc0; }
.c9 { background: #bf2d9a; }
.c10 { background: #4052a5; }

/* input method toolbar */
.imebar {
  position: absolute;
  right: 0;
  bottom: 26px;
  height: 25px;
  display: flex;
  align-items: center;
  gap: 6px;
  padding: 0 3px 0 15px;
  background: #fff;
  color: #2271c0;
}
.imebar .logo { position: absolute; left: -18px; bottom: 0; width: 27px; height: 27px; color: #ec4f26; }
.imebar .dim { color: #bcc4cc; }

.watermark {
  position: absolute;
  right: 46px;
  bottom: 48px;
  display: flex;
  align-items: center;
  gap: 7px;
  pointer-events: none;
  color: rgba(255, 255, 255, .45);
  text-shadow: 0 0 3px rgba(120, 120, 120, .35);
  font: 700 30px/40px "Liberation Sans", sans-serif;
}
.watermark svg { width: 56px; height: 64px; }
```
